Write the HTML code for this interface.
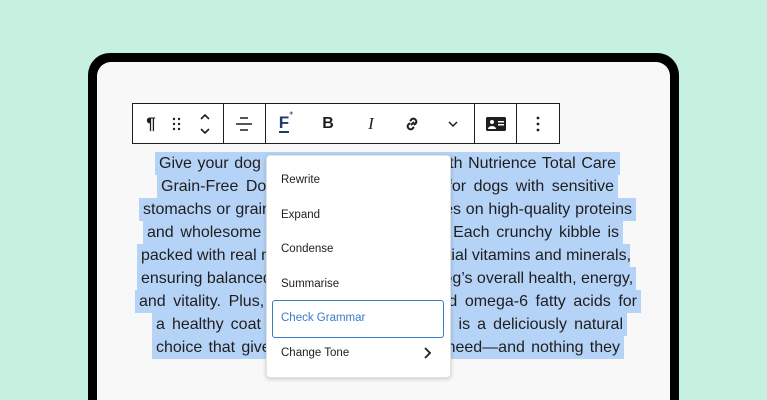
<!DOCTYPE html>
<html><head><meta charset="utf-8"><style>
*{margin:0;padding:0;box-sizing:border-box}
html,body{width:767px;height:400px;overflow:hidden}
body{background:#c6f1e1;position:relative;font-family:"Liberation Sans",sans-serif}
.frame{position:absolute;left:88px;top:53px;width:591px;height:347px;background:#000;border-radius:22px 22px 0 0}
.inner{position:absolute;left:97px;top:62px;width:573px;height:338px;background:#f8f8f8;border-radius:14px 14px 0 0}
.tb{position:absolute;left:132px;top:103px;width:428px;height:41px;border:1px solid #1e1e1e;background:#fff}
.dv{position:absolute;top:0;width:1px;height:39px;background:#1e1e1e}
.ic{position:absolute;top:0;height:39px;display:flex;align-items:center;justify-content:center;color:#1e1e1e}
.ln{position:absolute;height:23px;line-height:23px;background:#b5d3f7;color:#1e1e1e;font-size:16px;text-align:justify;text-align-last:justify;padding:0 4px;white-space:nowrap;overflow:hidden}
.menu{position:absolute;left:266px;top:155px;width:185px;height:223px;background:#fff;border-radius:4px;box-shadow:0 1px 4px rgba(0,0,0,.2);border:1px solid #e2e2e2}
.mi{position:absolute;left:14px;font-size:11.5px;color:#1e1e1e}
</style></head><body>
<div class="frame"></div><div class="inner"></div>
<div class="tb">
<div class="dv" style="left:90px"></div><div class="dv" style="left:132px"></div><div class="dv" style="left:341px"></div><div class="dv" style="left:383px"></div>
<div class="ic" style="left:8px;width:20px;font-size:17px;font-weight:bold">¶</div>
<div class="ic" style="left:36px;width:16px"><svg width="10" height="14"><g fill="#1e1e1e"><circle cx="2" cy="2" r="1.2"/><circle cx="7" cy="2" r="1.2"/><circle cx="2" cy="7" r="1.2"/><circle cx="7" cy="7" r="1.2"/><circle cx="2" cy="12" r="1.2"/><circle cx="7" cy="12" r="1.2"/></g></svg></div>
<div class="ic" style="left:62px;width:20px"><svg width="14" height="24" fill="none" stroke="#1e1e1e" stroke-width="1.6"><path d="M3 7l4-4 4 4M3 17l4 4 4-4"/></svg></div>
<div class="ic" style="left:100px;width:22px"><svg width="18" height="18" fill="none" stroke="#1e1e1e" stroke-width="1.5"><path d="M5 3h8M1 9h16M5 15h8"/></svg></div>
<div class="ic" style="left:142px;width:22px;color:#1e3a6e;font-weight:bold;font-size:17px"><span style="border-bottom:2px solid #1e3a6e;line-height:17px">F</span><span style="font-size:8px;position:relative;top:-9px">⁺</span></div>
<div class="ic" style="left:185px;width:20px;font-weight:bold;font-size:16px">B</div>
<div class="ic" style="left:228px;width:20px;font-style:italic;font-size:17px;font-family:'Liberation Serif',serif">I</div>
<div class="ic" style="left:267px;width:24px"><svg width="18" height="18" fill="none" stroke="#1e1e1e" stroke-width="2"><path d="M8 10l3-3M7 6l2-2a3 3 0 014 4l-2 2M11 12l-2 2a3 3 0 01-4-4l2-2"/></svg></div>
<div class="ic" style="left:310px;width:20px"><svg width="12" height="8" fill="none" stroke="#1e1e1e" stroke-width="1.5"><path d="M2 2l4 4 4-4"/></svg></div>
<div class="ic" style="left:351px;width:24px"><svg width="20" height="14"><rect x="0" y="0" width="20" height="14" rx="1.5" fill="#1e1e1e"/><circle cx="6" cy="5" r="2" fill="#fff"/><path d="M2 12a4 3 0 018 0z" fill="#fff"/><rect x="12" y="4" width="6" height="1.5" fill="#fff"/><rect x="12" y="7" width="6" height="1.5" fill="#fff"/></svg></div>
<div class="ic" style="left:395px;width:20px"><svg width="4" height="16" fill="#1e1e1e"><circle cx="2" cy="2" r="1.4"/><circle cx="2" cy="8" r="1.4"/><circle cx="2" cy="14" r="1.4"/></svg></div>
</div>
<div class="ln" style="top:152px;left:155px;width:465px">Give your dog the nutrition they need with Nutrience Total Care</div>
<div class="ln" style="top:175px;left:157px;width:461px">Grain-Free Dog Food, specially made for dogs with sensitive</div>
<div class="ln" style="top:198px;left:139px;width:497px">stomachs or grain allergies, this recipe relies on high-quality proteins</div>
<div class="ln" style="top:221px;left:143px;width:480px">and wholesome grains, free of allergens. Each crunchy kibble is</div>
<div class="ln" style="top:244px;left:137px;width:493px">packed with real meat, enriched with essential vitamins and minerals,</div>
<div class="ln" style="top:267px;left:137px;width:499px">ensuring balanced nutrition that supports dog’s overall health, energy,</div>
<div class="ln" style="top:290px;left:135px;width:506px">and vitality. Plus, it's rich in omega-3s and omega-6 fatty acids for</div>
<div class="ln" style="top:313px;left:152px;width:475px">a healthy coat and skin. The Total Care is a deliciously natural</div>
<div class="ln" style="top:336px;left:152px;width:472px">choice that gives your dog all that they need—and nothing they</div>
<div class="menu">
<div class="mi" style="top:18px">Rewrite</div>
<div class="mi" style="top:53px">Expand</div>
<div class="mi" style="top:87px">Condense</div>
<div class="mi" style="top:122px">Summarise</div>
<div style="position:absolute;left:5px;top:144px;width:172px;height:38px;border:1.5px solid #3a7bc8;border-radius:3px"></div>
<div class="mi" style="top:156px;color:#3a7bc8">Check Grammar</div>
<div class="mi" style="top:191px">Change Tone</div>
<svg style="position:absolute;left:156px;top:191px" width="8" height="12" fill="none" stroke="#1e1e1e" stroke-width="1.8"><path d="M2 1l5 5-5 5"/></svg>
</div>
</body></html>
